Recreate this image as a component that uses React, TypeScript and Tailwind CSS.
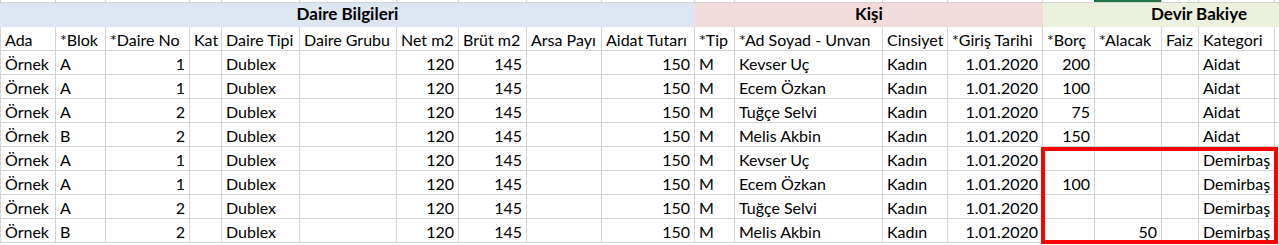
import React from "react";

type Col = { w: string; right?: boolean };

const cols: Col[] = [
  { w: "w-[56px] border-l" },
  { w: "w-[50px]" },
  { w: "w-[84px]", right: true },
  { w: "w-[32px]" },
  { w: "w-[78px]" },
  { w: "w-[97px]" },
  { w: "w-[62px]", right: true },
  { w: "w-[68px]", right: true },
  { w: "w-[75px]" },
  { w: "w-[93px]", right: true },
  { w: "w-[40px]" },
  { w: "w-[148px]" },
  { w: "w-[65px]" },
  { w: "w-[95px]", right: true },
  { w: "w-[52px]", right: true },
  { w: "w-[67px]", right: true },
  { w: "w-[37px]" },
  { w: "w-[76px]" },
  { w: "w-[80px]" },
];

const headers = [
  "Ada",
  "*Blok",
  "*Daire No",
  "Kat",
  "Daire Tipi",
  "Daire Grubu",
  "Net m2",
  "Brüt m2",
  "Arsa Payı",
  "Aidat Tutarı",
  "*Tip",
  "*Ad Soyad - Unvan",
  "Cinsiyet",
  "*Giriş Tarihi",
  "*Borç",
  "*Alacak",
  "Faiz",
  "Kategori",
  "",
];

const people = [
  ["A", "1", "Kevser Uç"],
  ["A", "1", "Ecem Özkan"],
  ["A", "2", "Tuğçe Selvi"],
  ["B", "2", "Melis Akbin"],
];

const extras = [
  ["200", "", "Aidat"],
  ["100", "", "Aidat"],
  ["75", "", "Aidat"],
  ["150", "", "Aidat"],
  ["", "", "Demirbaş"],
  ["100", "", "Demirbaş"],
  ["", "", "Demirbaş"],
  ["", "50", "Demirbaş"],
];

const rows: string[][] = extras.map((e, i) => {
  const p = people[i % 4];
  return [
    "Örnek",
    p[0],
    p[1],
    "",
    "Dublex",
    "",
    "120",
    "145",
    "",
    "150",
    "M",
    p[2],
    "Kadın",
    "1.01.2020",
    e[0],
    e[1],
    "",
    e[2],
    "",
  ];
});

function Row({ cells, alignRight }: { cells: string[]; alignRight: boolean }) {
  return (
    <div className="flex h-[24px] shrink-0 border-b border-[#d4d4d4]">
      {cols.map((c, i) => (
        <div
          key={i}
          className={`${c.w} shrink-0 h-full border-r border-[#d4d4d4] px-[4px] pt-[2px] leading-[22px] whitespace-nowrap overflow-hidden ${
            alignRight && c.right ? "text-right" : "text-left"
          }`}
        >
          {cells[i]}
        </div>
      ))}
    </div>
  );
}

export default function App() {
  return (
    <div
      className="relative w-[1279px] h-[245px] overflow-hidden bg-white text-black text-[16px]"
      style={{ fontFamily: "Lato, 'Open Sans', sans-serif" }}
    >
      <div className="flex flex-col w-[1400px]">
        {/* row 0 tail */}
        <div className="flex h-[3px] shrink-0 border-b border-[#d4d4d4]">
          {cols.map((c, i) => (
            <div key={i} className={`${c.w} shrink-0 h-full border-r border-[#d4d4d4]`} />
          ))}
        </div>
        {/* merged group headers */}
        <div className="flex h-[24px] shrink-0 font-bold text-[17px] leading-[22px]">
          <div className="w-[695px] shrink-0 bg-[#dce6f1] text-center">Daire Bilgileri</div>
          <div className="w-[348px] shrink-0 bg-[#f2dcdb] text-center">Kişi</div>
          <div className="w-[312px] shrink-0 bg-[#ebf1de] text-center">Devir Bakiye</div>
        </div>
        <Row cells={headers} alignRight={false} />
        {rows.map((r, i) => (
          <Row key={i} cells={r} alignRight={true} />
        ))}
      </div>
      <div className="absolute left-[1094px] top-0 w-[67px] h-[2px] bg-[#217346]" />
      <div className="absolute left-[1041px] top-[147px] w-[237px] h-[97px] border-4 border-[#ff0000]" />
    </div>
  );
}
